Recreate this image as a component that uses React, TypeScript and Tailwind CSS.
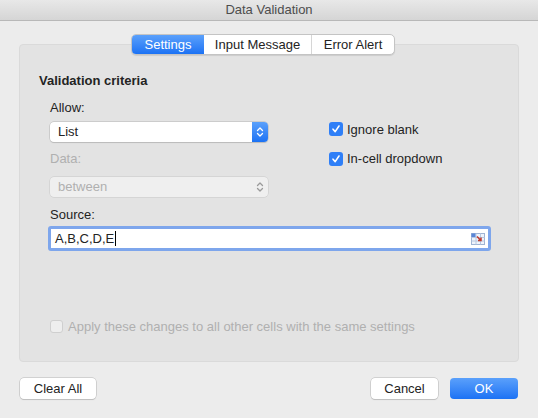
import React from "react";

const Check = () => (
  <div className="w-[14px] h-[14px] rounded-[3px] bg-[#2f7ff7] flex items-center justify-center">
    <svg width="10" height="10" viewBox="0 0 10 10">
      <path d="M2 5.2 L4.2 7.6 L8 2" fill="none" stroke="#fff" strokeWidth="1.6" strokeLinecap="round" strokeLinejoin="round" />
    </svg>
  </div>
);

const Stepper = ({ color }: { color: string }) => (
  <svg width="8" height="12" viewBox="0 0 8 12">
    <path d="M1.5 4.5 L4 2 L6.5 4.5 M1.5 7.5 L4 10 L6.5 7.5" fill="none" stroke={color} strokeWidth="1.3" strokeLinecap="round" strokeLinejoin="round" />
  </svg>
);

const App: React.FC = () => {
  return (
    <div className="w-[538px] h-[418px] bg-[#ececec] text-[13px] text-[#232323] flex flex-col" style={{ fontFamily: '"Liberation Sans", Arial, sans-serif' }}>
      <div className="h-[21px] flex items-center justify-center bg-gradient-to-b from-[#e8e8e8] to-[#d5d5d5] border-b border-[#b8b8b8] text-[#4d4d4d]">
        Data Validation
      </div>
      <div className="relative mx-[19px] mt-[23px] h-[318px] bg-[#e3e3e3] rounded-[4px] border border-[#dadada]">
        <div className="absolute left-[111px] top-[-11px] flex h-[21px] rounded-[5px] border border-[#c4c4c4] bg-white shadow-[0_1px_1px_rgba(0,0,0,0.1)] overflow-hidden">
          <div className="w-[72px] flex items-center justify-center text-white bg-gradient-to-b from-[#5aa0fb] to-[#1b72f4]">Settings</div>
          <div className="w-[108px] flex items-center justify-center border-r border-[#d6d6d6]">Input Message</div>
          <div className="w-[82px] flex items-center justify-center">Error Alert</div>
        </div>
        <div className="pt-[26px] pl-[19px] font-bold">Validation criteria</div>
        <div className="flex pl-[30px] pt-[7px]">
          <div className="w-[218px]">
            <div>Allow:</div>
            <div className="mt-[5px] h-[20px] bg-white rounded-[4px] shadow-[0_0_0_0.5px_#b5b5b5,0_1px_1px_rgba(0,0,0,0.15)] flex items-center overflow-hidden">
              <div className="flex-1 pl-[8px]">List</div>
              <div className="w-[16px] h-full bg-gradient-to-b from-[#5aa0fb] to-[#1b72f4] flex items-center justify-center"><Stepper color="#fff" /></div>
            </div>
            <div className="mt-[7px] text-[#b0b0b0]">Data:</div>
            <div className="mt-[8px] h-[20px] bg-[#efefef] rounded-[4px] shadow-[0_0_0_0.5px_#c8c8c8] flex items-center pl-[8px] pr-[4px] text-[#b0b0b0]">
              <div className="flex-1">between</div>
              <Stepper color="#9a9a9a" />
            </div>
          </div>
          <div className="ml-[61px] pt-[22px] flex flex-col gap-[10px]">
            <div className="flex items-center gap-[4px]"><Check />Ignore blank</div>
            <div className="flex items-center gap-[4px]"><Check />In-cell dropdown</div>
          </div>
        </div>
        <div className="pl-[30px] mt-[8px]">Source:</div>
        <div className="ml-[28px] mt-[2px] w-[443px] h-[25px] bg-white border-[3px] border-[#7ea6ec] rounded-[3px] flex items-center pl-[4px] pr-[3px]">
          <div className="flex-1 flex items-center">A,B,C,D,E<span className="w-px h-[15px] bg-black ml-[1px]" /></div>
          <svg width="14" height="12" viewBox="0 0 14 12">
            <rect x="0.5" y="0.5" width="13" height="11" fill="#eef3fb" stroke="#9fb4d4" />
            <path d="M0.5 4.5H13.5M0.5 8H13.5M5 0.5V11.5M9.5 0.5V11.5" stroke="#b8c8e0" />
            <rect x="0.5" y="0.5" width="4" height="3.5" fill="#5a86d6" />
            <path d="M6 3.5 L10 7.5 M10 4.5 V7.5 H7" stroke="#c0392b" strokeWidth="1.5" fill="none" />
          </svg>
        </div>
        <div className="pl-[30px] mt-[66px] flex items-center gap-[5px] text-[#b0b0b0]">
          <div className="w-[13px] h-[13px] rounded-[3px] bg-[#eeeeee] border border-[#cfcfcf]" />
          Apply these changes to all other cells with the same settings
        </div>
      </div>
      <div className="flex items-center mx-[20px] mt-[16px]">
        <div className="w-[76px] h-[21px] bg-white rounded-[4px] shadow-[0_0_0_0.5px_#b5b5b5,0_1px_1px_rgba(0,0,0,0.15)] flex items-center justify-center">Clear All</div>
        <div className="flex-1" />
        <div className="w-[67px] h-[21px] bg-white rounded-[4px] shadow-[0_0_0_0.5px_#b5b5b5,0_1px_1px_rgba(0,0,0,0.15)] flex items-center justify-center">Cancel</div>
        <div className="ml-[12px] w-[68px] h-[21px] rounded-[4px] bg-gradient-to-b from-[#5aa0fb] to-[#1b72f4] text-white flex items-center justify-center">OK</div>
      </div>
    </div>
  );
};

export default App;
